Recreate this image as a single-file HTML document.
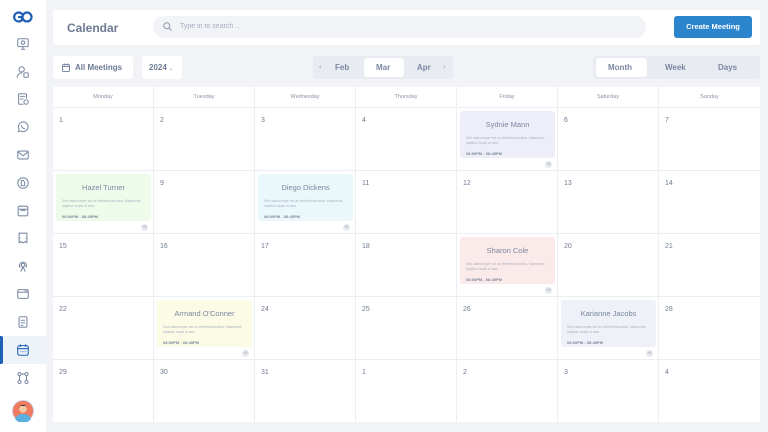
<!DOCTYPE html>
<html><head><meta charset="utf-8"><style>
*{box-sizing:border-box;margin:0;padding:0}
body{width:768px;height:432px;overflow:hidden;background:#f1f3f7;font-family:"Liberation Sans",sans-serif;position:relative;color:#6b7690}
.sb{position:absolute;left:0;top:0;width:46px;height:432px;background:#fff}
.ic{position:absolute;left:16px;width:14px;height:14px}
.ic svg{width:14px;height:14px;fill:none;stroke:#7b8aa3;stroke-width:1.2;stroke-linecap:round;stroke-linejoin:round}
.card{position:absolute;background:#fff}
.cell{position:absolute;border-right:1px solid #eceef3;border-bottom:1px solid #eceef3;background:#fff}
.num{position:absolute;left:6px;top:9px;font-size:7px;color:#6f7a90}
.dh{position:absolute;top:87px;height:21px;font-size:5.5px;color:#8a93a6;text-align:center;line-height:21px;border-right:1px solid #eceef3;border-bottom:1px solid #eceef3;background:#fff}
.ev{position:absolute;border-radius:3px;padding:0 6px}
.ev .t{font-size:7.5px;color:#7b86a0;text-align:center;margin-top:9px}
.ev .d{font-size:3.4px;color:#aab2c2;margin-top:7px;line-height:5px}
.ev .tm{font-size:4px;color:#7d879b;font-weight:bold;margin-top:5px}
.pl{position:absolute;width:7px;height:7px;border-radius:50%;background:#e6e9ef;font-size:3.5px;color:#889;text-align:center;line-height:7px}
</style></head><body>
<div class="sb">
<svg style="position:absolute;left:13px;top:10px" width="21" height="14" viewBox="0 0 21 14"><path d="M9 4 A4.5 4.5 0 1 0 9 10 L9 7 L6 7" fill="none" stroke="#1f5fb5" stroke-width="2.2" stroke-linecap="round"/><circle cx="14" cy="7" r="4.5" fill="none" stroke="#1f5fb5" stroke-width="2.2"/></svg>
<div class="ic" style="top:37px"><svg viewBox="0 0 16 16"><rect x="2" y="2" width="12" height="9" rx="1.5"/><path d="M6 14h4M8 11v3"/><circle cx="8" cy="6.5" r="2"/></svg></div>
<div class="ic" style="top:65px"><svg viewBox="0 0 16 16"><circle cx="6.5" cy="5" r="3"/><path d="M1.5 14c0-3 2.5-5 5-5"/><rect x="9" y="9" width="5" height="5" rx="1"/></svg></div>
<div class="ic" style="top:92px"><svg viewBox="0 0 16 16"><path d="M12 7V3a1 1 0 0 0-1-1H4a1 1 0 0 0-1 1v10a1 1 0 0 0 1 1h4"/><path d="M5 5h5M5 8h3"/><circle cx="11.5" cy="11.5" r="2.5"/></svg></div>
<div class="ic" style="top:120px"><svg viewBox="0 0 16 16"><path d="M2.5 13.5l1-3a5.5 5.5 0 1 1 2 2z"/><path d="M6 6c0 2 2 4 4 4"/></svg></div>
<div class="ic" style="top:148px"><svg viewBox="0 0 16 16"><rect x="2" y="3.5" width="12" height="9" rx="1.5"/><path d="M2.5 4.5L8 9l5.5-4.5"/></svg></div>
<div class="ic" style="top:176px"><svg viewBox="0 0 16 16"><circle cx="8" cy="8" r="6"/><path d="M6 5v6h4V7.5L8.5 5z"/></svg></div>
<div class="ic" style="top:204px"><svg viewBox="0 0 16 16"><rect x="2.5" y="2.5" width="11" height="11" rx="1.5"/><path d="M2.5 6h11M5.5 6c0 2 2 2 2.5 0c.5 2 2.5 2 2.5 0"/></svg></div>
<div class="ic" style="top:231px"><svg viewBox="0 0 16 16"><path d="M3.5 2.5h9v11l-2-1.5-2.5 1.5-2.5-1.5-2 1.5zM3.5 8h1M11.5 8h1"/></svg></div>
<div class="ic" style="top:259px"><svg viewBox="0 0 16 16"><circle cx="8" cy="7" r="2"/><path d="M4.5 9.5a4 4 0 1 1 7 0M5.5 14l2.5-5 2.5 5"/></svg></div>
<div class="ic" style="top:287px"><svg viewBox="0 0 16 16"><rect x="2" y="3" width="12" height="10" rx="1.5"/><path d="M2 6h12M10 4.5h.5M12 4.5h.3"/></svg></div>
<div class="ic" style="top:315px"><svg viewBox="0 0 16 16"><rect x="3.5" y="2" width="9" height="12" rx="1.5"/><path d="M6 6h4M6 9h4M6 12h2"/></svg></div>
<div style="position:absolute;left:0;top:336px;width:46px;height:28px;background:#eef3fa"></div>
<div style="position:absolute;left:0;top:336px;width:3px;height:28px;background:#1f5fb5;border-radius:0 2px 2px 0"></div>
<div class="ic" style="top:343px"><svg viewBox="0 0 16 16" style="stroke:#1f5fb5"><rect x="2" y="3" width="12" height="11" rx="2"/><path d="M2 6.5h12M5 2v2M11 2v2M5.5 10h.1M8 10h.1M10.5 10h.1"/></svg></div>
<div class="ic" style="top:371px"><svg viewBox="0 0 16 16"><circle cx="4" cy="3.5" r="1.8"/><circle cx="12" cy="3.5" r="1.8"/><circle cx="4" cy="12.5" r="1.8"/><circle cx="12" cy="12.5" r="1.8"/><path d="M4 5.3v5.4M12 5.3v5.4M5.8 3.5h4.4"/></svg></div>
<svg style="position:absolute;left:12px;top:400px" width="22" height="22" viewBox="0 0 22 22"><circle cx="11" cy="11" r="10.5" fill="#ef7a5e" stroke="#ccd" stroke-width="1"/><path d="M3 19c2-4 4-5 8-5s6 1 8 5a10 10 0 0 1-16 0z" fill="#5ab0e0"/><circle cx="11" cy="9" r="3.8" fill="#f5c8a8"/><path d="M7 8c0-4 8-4 8 0l-1-2h-6z" fill="#333"/></svg>
</div>

<div class="card" style="left:53px;top:10px;width:707px;height:35px;border-radius:3px"></div>
<div style="position:absolute;left:67px;top:21px;font-size:12px;font-weight:bold;color:#6c7a93">Calendar</div>
<div style="position:absolute;left:153px;top:16px;width:493px;height:22px;border-radius:11px;background:#f1f3f7"></div>
<svg style="position:absolute;left:163px;top:22px" width="9" height="9" viewBox="0 0 9 9"><circle cx="3.8" cy="3.8" r="3" fill="none" stroke="#8a93a6" stroke-width="1"/><path d="M6 6l2.5 2.5" stroke="#8a93a6" stroke-width="1"/></svg>
<div style="position:absolute;left:180px;top:23px;font-size:7px;color:#a6adbb">Type in to search ..</div>
<div style="position:absolute;left:674px;top:16px;width:78px;height:22px;border-radius:3px;background:#2b84cc;color:#fff;font-size:7.5px;font-weight:bold;text-align:center;line-height:22px">Create Meeting</div>

<div class="card" style="left:53px;top:56px;width:80px;height:23px;border-radius:3px"></div>
<svg style="position:absolute;left:62px;top:63px" width="8" height="9" viewBox="0 0 8 9"><rect x=".5" y="1.5" width="7" height="7" rx="1" fill="none" stroke="#7b8aa3"/><path d="M.5 3.5h7M2.5 .5v2M5.5 .5v2" stroke="#7b8aa3"/></svg>
<div style="position:absolute;left:75px;top:63px;font-size:8px;font-weight:bold;color:#6c7a93">All Meetings</div>
<div class="card" style="left:142px;top:56px;width:40px;height:23px;border-radius:3px"></div>
<div style="position:absolute;left:149px;top:63px;font-size:8px;font-weight:bold;color:#6c7a93">2024 <span style="font-size:5px;color:#aab">⌄</span></div>

<div style="position:absolute;left:313px;top:56px;width:140px;height:23px;border-radius:4px;background:#e8ebf1"></div>
<div style="position:absolute;left:319px;top:62px;font-size:8px;color:#98a1b3">‹</div>
<div style="position:absolute;left:335px;top:63px;font-size:8px;font-weight:bold;color:#7b86a0">Feb</div>
<div style="position:absolute;left:364px;top:58px;width:40px;height:19px;border-radius:3px;background:#fff"></div>
<div style="position:absolute;left:376px;top:63px;font-size:8px;font-weight:bold;color:#7b86a0">Mar</div>
<div style="position:absolute;left:417px;top:63px;font-size:8px;font-weight:bold;color:#7b86a0">Apr</div>
<div style="position:absolute;left:443px;top:62px;font-size:8px;color:#98a1b3">›</div>

<div style="position:absolute;left:593px;top:56px;width:167px;height:23px;border-radius:4px;background:#e8ebf1"></div>
<div style="position:absolute;left:596px;top:58px;width:51px;height:19px;border-radius:3px;background:#fff"></div>
<div style="position:absolute;left:608px;top:63px;font-size:8px;font-weight:bold;color:#7b86a0">Month</div>
<div style="position:absolute;left:665px;top:63px;font-size:8px;font-weight:bold;color:#7b86a0">Week</div>
<div style="position:absolute;left:718px;top:63px;font-size:8px;font-weight:bold;color:#7b86a0">Days</div>

<div style="position:absolute;left:53px;top:87px;width:707px;height:335px;background:#fff;border-radius:3px"></div>
<div class="dh" style="left:53px;width:101px">Monday</div>
<div class="dh" style="left:154px;width:101px">Tuesday</div>
<div class="dh" style="left:255px;width:101px">Wednesday</div>
<div class="dh" style="left:356px;width:101px">Thursday</div>
<div class="dh" style="left:457px;width:101px">Friday</div>
<div class="dh" style="left:558px;width:101px">Saturday</div>
<div class="dh" style="left:659px;width:101px;border-right:none">Sunday</div>

<div id="g"></div>
<script>
var nums=[[1,2,3,4,5,6,7],[8,9,10,11,12,13,14],[15,16,17,18,19,20,21],[22,23,24,25,26,27,28],[29,30,31,1,2,3,4]];
var tops=[108,171,234,297,360],hs=[63,63,63,63,62];
var h='';
var ev={'0,4':['Sydnie Mann','#eeeef8'],'1,0':['Hazel Turner','#effbea'],'1,2':['Diego Dickens','#ebf8fb'],'2,4':['Sharon Cole','#fbeaea'],'3,1':["Armand O'Conner",'#fbfbe6'],'3,5':['Karianne Jacobs','#eef1f7']};
for(var r=0;r<5;r++)for(var c=0;c<7;c++){
 var x=53+c*101,y=tops[r];
 h+='<div class="cell" style="left:'+x+'px;top:'+y+'px;width:101px;height:'+hs[r]+'px;'+(c==6?'border-right:none;':'')+(r==4?'border-bottom:none;':'')+'">';
 var e=ev[r+','+c];
 if(e){h+='<div class="ev" style="left:3px;top:3px;width:95px;height:47px;background:'+e[1]+'"><div class="t">'+e[0]+'</div><div class="d">Sed ullamcorper est ac eleifend faucibus. Maecenas dapibus turpis ut sem.</div><div class="tm">08:00PM - 08:45PM</div></div><div class="pl" style="left:88px;top:53px">+2</div>';}
 else h+='<div class="num">'+nums[r][c]+'</div>';
 h+='</div>';
}
document.getElementById('g').innerHTML=h;
</script>
</body></html>
